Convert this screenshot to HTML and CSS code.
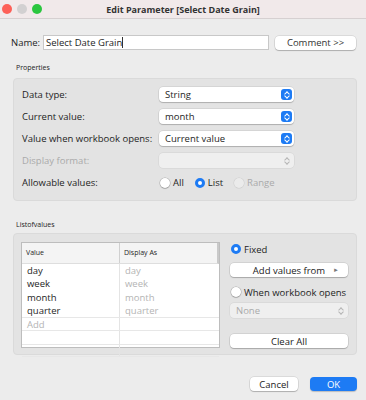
FILE: index.html
```html
<!DOCTYPE html>
<html lang="en">
<head>
    <meta charset="UTF-8">
    <title>Edit Parameter [Select Date Grain]</title>
    <link rel="stylesheet" href="styles.css">
</head>
<body>
    <div class="window">
        <div class="titlebar">
            <div class="lights">
                <span class="light red"></span>
                <span class="light grey"></span>
                <span class="light green"></span>
            </div>
            <div class="title">Edit Parameter [Select Date Grain]</div>
            <div></div>
        </div>

        <div class="content">
            <div class="name-row">
                <span class="name-label">Name:</span>
                <div class="text-input">Select Date Grain<span class="caret"></span></div>
                <button class="btn comment">Comment &gt;&gt;</button>
            </div>

            <div class="section-label">Properties</div>
            <div class="group props">
                <div class="prop-row">
                    <span class="prop-label">Data type:</span>
                    <div class="select">String<span class="stepper"></span></div>
                </div>
                <div class="prop-row">
                    <span class="prop-label">Current value:</span>
                    <div class="select">month<span class="stepper"></span></div>
                </div>
                <div class="prop-row">
                    <span class="prop-label">Value when workbook opens:</span>
                    <div class="select">Current value<span class="stepper"></span></div>
                </div>
                <div class="prop-row">
                    <span class="prop-label disabled">Display format:</span>
                    <div class="select off"><span class="stepper off"></span></div>
                </div>
                <div class="prop-row">
                    <span class="prop-label">Allowable values:</span>
                    <div class="radios">
                        <label class="radio"><span class="dot"></span>All</label>
                        <label class="radio"><span class="dot on"></span>List</label>
                        <label class="radio disabled"><span class="dot off"></span>Range</label>
                    </div>
                </div>
            </div>

            <div class="section-label list-label">Listofvalues</div>
            <div class="group values">
                <div class="table">
                    <div class="thead">
                        <div class="cell">Value</div>
                        <div class="cell">Display As</div>
                    </div>
                    <div class="trow"><div class="cell">day</div><div class="cell dim">day</div></div>
                    <div class="trow"><div class="cell">week</div><div class="cell dim">week</div></div>
                    <div class="trow"><div class="cell">month</div><div class="cell dim">month</div></div>
                    <div class="trow"><div class="cell">quarter</div><div class="cell dim">quarter</div></div>
                    <div class="trow"><div class="cell dim">Add</div><div class="cell"></div></div>
                    <div class="trow"><div class="cell"></div><div class="cell"></div></div>
                    <div class="trow last"><div class="cell"></div><div class="cell"></div></div>
                </div>
                <div class="side">
                    <label class="radio"><span class="dot on"></span>Fixed</label>
                    <button class="btn wide add">Add values from <span class="arrow">&#9658;</span></button>
                    <label class="radio when"><span class="dot"></span>When workbook opens</label>
                    <div class="select off none">None<span class="stepper off"></span></div>
                    <button class="btn wide clear">Clear All</button>
                </div>
            </div>

            <div class="footer">
                <button class="btn cancel">Cancel</button>
                <button class="btn ok">OK</button>
            </div>
        </div>
    </div>
</body>
</html>
```

FILE: styles.css
```css
* {
    box-sizing: border-box;
}

body {
    margin: 0;
    background-color: #ececec;
    font-family: "Open Sans", sans-serif;
    font-size: 9.5px;
    color: #1e1e1e;
    white-space: nowrap;
}

.window {
    width: 366px;
    height: 400px;
    background-color: #ececec;
}

.titlebar {
    height: 19px;
    display: grid;
    grid-template-columns: 1fr auto 1fr;
    align-items: center;
    background-color: #f1e9ea;
    border-bottom: 1px solid #d6d0d1;
}

.lights {
    display: flex;
    gap: 5px;
    padding-left: 2px;
}

.light {
    width: 10px;
    height: 10px;
    border-radius: 50%;
}

.red { background-color: #fd5f57; }
.grey { background-color: #d2d0d1; }
.green { background-color: #2bc63f; }

.title {
    font-weight: bold;
    font-size: 9px;
    color: #333;
}

.content {
    padding: 16px 8px 0 13px;
}

.name-row {
    display: flex;
    align-items: center;
    height: 15px;
}

.name-label {
    width: 32px;
    margin-left: -2px;
}

.text-input {
    width: 226px;
    height: 15px;
    background: #fff;
    border: 1px solid #c8c8c8;
    padding: 0 2px;
    line-height: 13px;
}

.caret {
    display: inline-block;
    width: 1px;
    height: 11px;
    background: #333;
    vertical-align: -2px;
}

.btn {
    font-family: inherit;
    font-size: 9.5px;
    color: #222;
    height: 14px;
    padding: 0;
    border: none;
    border-radius: 4px;
    background: #fff;
    box-shadow: 0 0 0 0.5px rgba(0, 0, 0, 0.15), 0 1px 1px rgba(0, 0, 0, 0.2);
}

.comment {
    width: 81px;
    margin-left: 6px;
    color: #333;
}

.section-label {
    font-size: 7px;
    margin: 13px 0 0 3px;
    height: 15px;
    color: #222;
}

.group {
    width: 344px;
    background-color: #e3e3e3;
    border: 1px solid #dadada;
    border-radius: 4px;
}

.props {
    padding: 8px 0 10px 8px;
    display: flex;
    flex-direction: column;
    gap: 7px;
}

.prop-row {
    display: flex;
    align-items: center;
    height: 15px;
}

.prop-label {
    width: 137px;
}

.disabled {
    color: #aaa;
}

.select {
    position: relative;
    width: 135px;
    height: 15px;
    background: #fff;
    border-radius: 4px;
    padding-left: 6px;
    line-height: 15px;
    box-shadow: 0 0 0 0.5px rgba(0, 0, 0, 0.12), 0 1px 1px rgba(0, 0, 0, 0.18);
}

.select.off {
    background: #efefef;
    color: #aaa;
    box-shadow: 0 0 0 0.5px rgba(0, 0, 0, 0.08);
}

.stepper {
    position: absolute;
    right: 2px;
    top: 2px;
    width: 11px;
    height: 11px;
    border-radius: 3px;
    background: #1d7bf4;
}

.stepper::before,
.stepper::after {
    content: "";
    position: absolute;
    left: 3.5px;
    width: 3px;
    height: 3px;
    border-left: 1.2px solid #fff;
    border-top: 1.2px solid #fff;
}

.stepper::before {
    top: 2.5px;
    transform: rotate(45deg);
}

.stepper::after {
    bottom: 2.5px;
    transform: rotate(225deg);
}

.stepper.off {
    background: none;
}

.stepper.off::before,
.stepper.off::after {
    border-color: #b5b5b5;
}

.radios {
    display: flex;
    align-items: center;
    gap: 11px;
}

.radio {
    display: flex;
    align-items: center;
    gap: 3px;
}

.radios .radio:first-child {
    margin-left: 1px;
}

.dot {
    width: 10px;
    height: 10px;
    border-radius: 50%;
    background: #fff;
    box-shadow: 0 0 0 0.5px rgba(0, 0, 0, 0.25), 0 1px 1px rgba(0, 0, 0, 0.15);
}

.dot.on {
    background: #fff;
    border: 3px solid #1d7bf4;
    box-shadow: none;
}

.dot.off {
    background: #ebebeb;
    box-shadow: 0 0 0 0.5px rgba(0, 0, 0, 0.1);
}

.list-label {
    margin-top: 19px;
    height: 13px;
}

.values {
    height: 122px;
    padding: 8px 0 0 7px;
    display: flex;
    gap: 10px;
}

.table {
    width: 199px;
    height: 106px;
    background: #fff;
    border: 1px solid #bdbdbd;
    display: flex;
    flex-direction: column;
}

.thead,
.trow {
    display: grid;
    grid-template-columns: 98px 1fr;
}

.thead {
    height: 21px;
    flex: none;
    background: #f4f4f4;
    border-bottom: 1px solid #dedede;
    border-right: 2px solid #c9c9c9;
    font-size: 7px;
    align-items: center;
}

.thead .cell {
    height: 100%;
    line-height: 19px;
    padding-left: 4px;
}

.thead .cell:first-child {
    border-right: 1px solid #d0d0d0;
}

.trow {
    height: 13.3px;
    flex: none;
    line-height: 13px;
}

.trow .cell {
    padding-left: 5px;
}

.trow .cell:first-child {
    border-right: 1px solid #e4e4e4;
}

.trow:nth-child(n+6) {
    border-top: 1px solid #e7e7e7;
}

.trow.last {
    border-bottom: 1px solid #e7e7e7;
}

.dim {
    color: #b4b4b4;
}

.side {
    width: 118px;
    display: flex;
    flex-direction: column;
    align-items: stretch;
}

.side .radio {
    margin-top: 1px;
    margin-left: 1px;
    height: 12px;
}

.wide {
    height: 14px;
    width: 118px;
}

.add {
    margin-top: 8px;
    position: relative;
}

.arrow {
    position: absolute;
    right: 9px;
    top: 3px;
    font-size: 6px;
    color: #777;
}

.side .when {
    margin-top: 9px;
}

.none {
    margin-top: 5px;
    width: 118px;
}

.clear {
    margin-top: 16px;
}

.footer {
    display: flex;
    justify-content: flex-end;
    gap: 12px;
    margin-top: 22px;
    padding-right: 1px;
}

.cancel {
    width: 48px;
}

.ok {
    width: 47px;
    background: #1d7bf4;
    color: #fff;
    box-shadow: 0 1px 1px rgba(0, 0, 0, 0.2);
}
```
